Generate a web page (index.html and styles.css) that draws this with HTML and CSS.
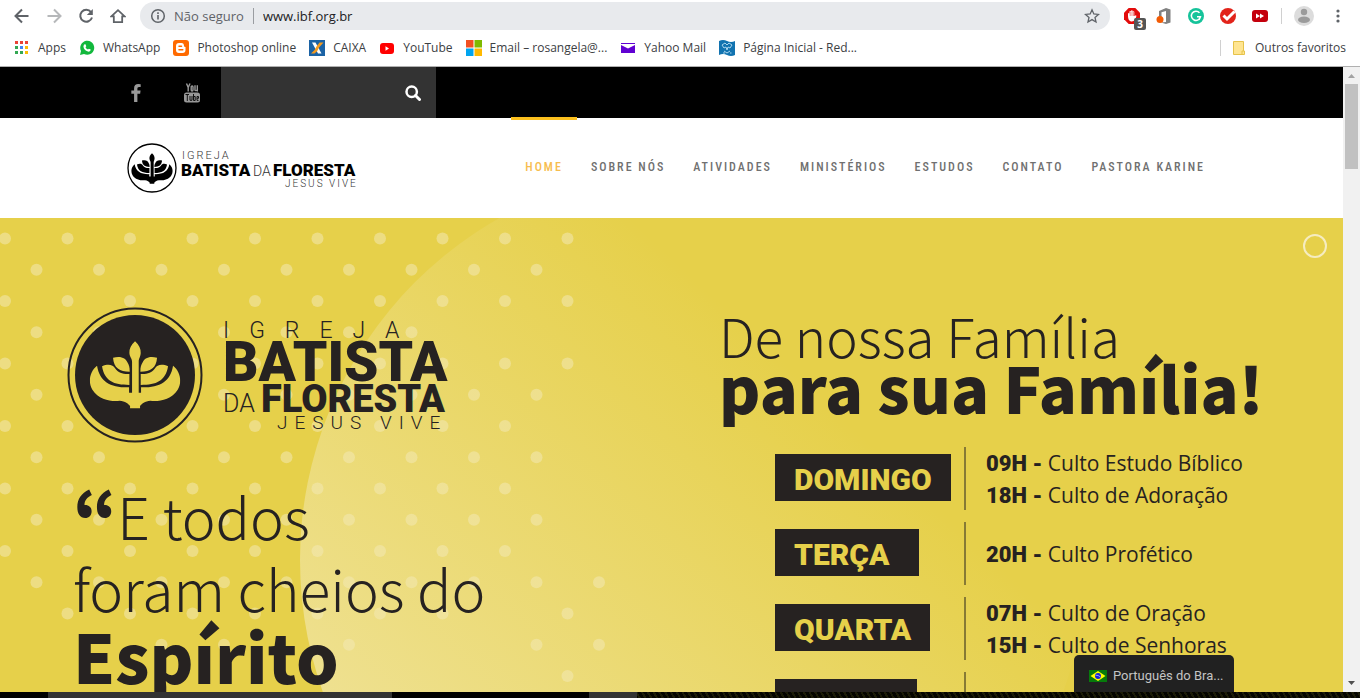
FILE: index.html
```html
<!DOCTYPE html>
<html lang="pt-BR">
<head>
<meta charset="utf-8">
<title>Igreja Batista da Floresta</title>
<link rel="stylesheet" href="styles.css">
</head>
<body>
<svg class="defs" aria-hidden="true">
  <symbol id="plant" viewBox="150 154 272 204">
    <path d="M172 228C150 245 144 277 158 300C178 332 218 336 240 333C256 334 267 343 271 349V356H301V349C305 343 316 334 332 333C354 336 394 332 414 300C428 277 422 245 400 228C392 276 360 294 304 293V309H268V293C212 294 180 276 172 228Z"/>
    <path d="M187 230C205 222 220 225 226 236C236 250 250 254 269 253V286C222 286 194 274 187 230Z"/>
    <path d="M385 230C367 222 352 225 346 236C336 250 322 254 303 253V286C350 286 378 274 385 230Z"/>
    <path d="M220 204C245 198 258 206 263 218C268 226 270 232 270 246C240 245 222 235 220 204Z"/>
    <path d="M352 204C327 198 314 206 309 218C304 226 302 232 302 246C332 245 350 235 352 204Z"/>
    <path d="M286 155C274 166 268 178 269 190C270 203 277 206 277 216V312H297V216C297 206 302 203 303 190C304 178 298 166 286 155Z"/>
  </symbol>
</svg>

<div class="browser">
  <div class="toolbar">
    <button class="tool" aria-label="Voltar"><svg width="16" height="16" viewBox="0 0 16 16"><path class="line" d="M14.500 8H2M8 1.500L1.500 8L8 14.500"/></svg></button>
    <button class="tool tool-off" aria-label="Avançar"><svg width="16" height="16" viewBox="0 0 16 16"><path class="line" d="M1.500 8H14M8 1.500L14.500 8L8 14.500"/></svg></button>
    <button class="tool" aria-label="Recarregar"><svg width="16" height="16" viewBox="0 0 16 16"><path class="line" d="M13 4A6 6 0 1 0 14 9.500"/><path d="M14.800 1V7H8.800Z" fill="#5f6368"/></svg></button>
    <button class="tool" aria-label="Página inicial"><svg width="16" height="16" viewBox="0 0 18 16"><path class="line" d="M1.500 8.500L9 1.500L16.500 8.500H13.700V15H4.300V8.500Z"/></svg></button>
    <div class="omnibox">
      <svg width="16" height="16" viewBox="0 0 16 16"><circle cx="8" cy="8" r="6.300" fill="none" stroke="#5f6368" stroke-width="1.500"/><path d="M7.200 7H8.800V11.500H7.200ZM7.200 4.300H8.800V5.900H7.200Z" fill="#5f6368"/></svg>
      <span class="insecure">Não seguro</span>
      <input class="url" aria-label="Endereço" value="www.ibf.org.br">
      <button class="tool" aria-label="Favoritar"><svg width="16" height="16" viewBox="0 0 16 16"><path d="M8 1.800L9.800 6L14.500 6.400L11 9.500L12 14L8 11.600L4 14L5 9.500L1.500 6.400L6.200 6Z" fill="none" stroke="#5f6368" stroke-width="1.300"/></svg></button>
    </div>
    <div class="extensions">
      <button class="ext" aria-label="Bloqueador"><svg width="16" height="16" viewBox="0 0 16 16"><path d="M4.700 0H11.300L16 4.700V11.300L11.300 16H4.700L0 11.300V4.700Z" fill="#e30b0b"/><path d="M4 8V5.500Q4.700 4.500 5.400 5.500V3.500Q6.200 2.500 7 3.500V2.800Q7.900 1.800 8.700 2.800V3.500Q9.600 2.700 10.300 3.700V8L12 7.200Q13 7.700 11.300 11Q9.500 14 7 13.500Q4 12.500 4 8Z" fill="#fff"/><path d="M6.200 4V8M8 3.500V8M9.600 4V8" stroke="#e30b0b" stroke-width=".5"/></svg><span class="count">3</span></button>
      <button class="ext" aria-label="Office"><svg width="16" height="16" viewBox="0 0 16 16"><path d="M3 3L10 0L14.500 1.500V14.500L10 16L5 14.500L10 14V3L5.500 4.200V9L3 10Z" fill="#808080"/><circle cx="4" cy="11.500" r="3.500" fill="#f35b04"/></svg></button>
      <button class="ext" aria-label="Grammarly"><svg width="16" height="16" viewBox="0 0 16 16"><circle cx="8" cy="8" r="8" fill="#15c39a"/><path d="M11.500 4.800A4.600 4.600 0 1 0 12.500 8.700H9M12.500 8.700L11 11.800" fill="none" stroke="#fff" stroke-width="1.500"/></svg></button>
      <button class="ext" aria-label="Verificador"><svg width="16" height="16" viewBox="0 0 16 16"><circle cx="8" cy="8" r="8" fill="#e2231a"/><path d="M3.500 7.500L7 11L14.500 3.500" fill="none" stroke="#fff" stroke-width="3"/></svg></button>
      <button class="ext" aria-label="Acelerar vídeo"><svg width="16" height="16" viewBox="0 0 16 16"><rect y="2" width="16" height="12" rx="3" fill="#c4000d"/><path d="M4 5.500L8 8L4 10.500ZM8 5.500L12 8L8 10.500Z" fill="#fff"/></svg></button>
    </div>
    <button class="profile" aria-label="Perfil"><svg width="20" height="20" viewBox="0 0 20 20"><circle cx="10" cy="10" r="10" fill="#dcdcdc"/><circle cx="10" cy="6" r="3.200" fill="#9b9b9b"/><ellipse cx="10" cy="13.700" rx="6" ry="3.200" fill="#9b9b9b"/></svg></button>
    <button class="tool" aria-label="Menu"><svg width="16" height="16" viewBox="0 0 16 16" fill="#5f6368"><circle cx="8" cy="3" r="1.600"/><circle cx="8" cy="8" r="1.600"/><circle cx="8" cy="13" r="1.600"/></svg></button>
  </div>

  <nav class="bookmarks" aria-label="Favoritos">
    <a class="bookmark" href="#"><svg width="16" height="16" viewBox="0 0 16 16"><g fill="#ea4335"><path d="M1 1h3v3H1zM6 1h3v3H6zM11 1h3v3h-3z"/></g><path d="M1 6h3v3H1zM1 11h3v3H1zM6 11h3v3H6z" fill="#34a853"/><path d="M6 6h3v3H6z" fill="#4285f4"/><path d="M11 6h3v3h-3zM11 11h3v3h-3z" fill="#fbbc05"/></svg>Apps</a>
    <a class="bookmark" href="#"><svg width="16" height="16" viewBox="0 0 16 16"><path d="M1 15L2 11A7 7 0 1 1 5 14Z" fill="#12b83c"/><path d="M5 4.500L6.500 4.300L7.300 6.300L6.500 7.200Q7.300 8.900 9 9.500L9.900 8.700L11.700 9.500Q11.700 11.500 9.700 11.700Q5 10.800 4.400 6.500Z" fill="#fff"/></svg>WhatsApp</a>
    <a class="bookmark" href="#"><svg width="16" height="16" viewBox="0 0 16 16"><rect width="16" height="16" rx="3" fill="#ff6a00"/><path d="M6 3H8.500Q11 3 11 6Q11 7 12.500 7V10Q12.500 13 9.500 13H6Q3 13 3 10V6Q3 3 6 3Z" fill="#fff"/><path d="M6 6.200H8.500M6 9.800H9.800" stroke="#ff6a00" stroke-width="1.500" stroke-linecap="round"/></svg>Photoshop online</a>
    <a class="bookmark" href="#"><svg width="16" height="16" viewBox="0 0 16 16"><path d="M0 0H16V16H0Z" fill="#1c63a5"/><path d="M3 2.500H6.500L12.500 13.500H9Z" fill="#fff"/><path d="M14.500 2.500H10.500L7.500 6.500Q6.500 10 2 13.500H5.500Q9 11 10 7.500Z" fill="#f59b1f"/></svg>CAIXA</a>
    <a class="bookmark" href="#"><svg width="16" height="16" viewBox="0 0 16 16"><rect x="1" y="3" width="14" height="11" rx="3" fill="#f00"/><path d="M6.500 6.200L10 8.500L6.500 10.800Z" fill="#fff"/></svg>YouTube</a>
    <a class="bookmark" href="#"><svg width="16" height="16" viewBox="0 0 16 16"><path d="M0 0h7.500v7.500H0z" fill="#f25022"/><path d="M8.500 0H16v7.500H8.500z" fill="#7fba00"/><path d="M0 8.500h7.500V16H0z" fill="#00a4ef"/><path d="M8.500 8.500H16V16H8.500z" fill="#ffb900"/></svg>Email – rosangela@...</a>
    <a class="bookmark" href="#"><svg width="16" height="16" viewBox="0 0 16 16"><path d="M1 3H15V13H1Z" fill="#6001d2"/><path d="M1 4H15V5L8 8.500L1 5Z" fill="#fff"/></svg>Yahoo Mail</a>
    <a class="bookmark" href="#"><svg width="16" height="16" viewBox="0 0 16 16"><path d="M0 1Q4 -1 8 1T16 1V15Q12 17 8 15T0 15Z" fill="#1273b0"/><path d="M3 5L6 3L8 5L10 3L13 5L11 8L9 7L8 10L7 7L5 8ZM5 11L8 13L11 11M4 13H6M11 13H12.500" fill="none" stroke="#a9d5ec"/></svg>Página Inicial - Red...</a>
    <a class="bookmark bookmark-last" href="#"><svg width="16" height="16" viewBox="0 0 16 16"><path d="M2.500 1.500H12.500V14.500H2.500Z" fill="#ffe591" stroke="#e6c34a"/><path d="M11 11H13.500V14.500H11Z" fill="#ffe591" stroke="#e6c34a"/></svg>Outros favoritos</a>
  </nav>

  <div class="window">
    <div class="page">
      <div class="topbar">
        <a class="social" href="#" aria-label="Facebook"><svg width="12" height="18" viewBox="95 0 864 1664"><path d="M959 12v264h-157q-86 0-116 36t-30 108v189h293l-39 296h-254v759h-306v-759h-255v-296h255v-218q0-186 104-288.500t277-102.500q147 0 228 12z" fill="#999"/></svg></a>
        <a class="social" href="#" aria-label="YouTube"><svg width="16" height="20" viewBox="0 0 16 20"><g fill="none" stroke="#999" stroke-width="1.400"><path d="M2.500 .5L4.200 4.500V8.500M6 .5L4.200 4.500"/><rect x="7.200" y="3" width="1.800" height="5" rx=".9"/><path d="M11 2.300V7Q11 8.300 13 7M13.300 2.300V8.500"/></g><rect y="9.500" width="16" height="10" rx="2.500" fill="#999"/><path d="M1.500 11.500H5M3.300 11.500V18M6 13V17.300H8V13M9.500 11V17.500H11.200V13.500H9.500M14.500 17.400H13V13.500H14.500V15.300H13" fill="none" stroke="#111"/></svg></a>
        <form class="search">
          <input class="search-input" type="text" aria-label="Buscar">
          <button class="search-btn" type="button" aria-label="Buscar"><svg width="16" height="16" viewBox="0 0 16 16"><circle cx="6.700" cy="6.700" r="5.200" fill="none" stroke="#fff" stroke-width="2.500"/><path d="M10.500 10.500L14.500 14.500" stroke="#fff" stroke-width="3" stroke-linecap="round"/></svg></button>
        </form>
      </div>

      <header class="header">
        <a class="brand" href="#" aria-label="Igreja Batista da Floresta">
          <svg width="232" height="50" viewBox="0 0 232 50">
            <circle cx="25" cy="25" r="24" fill="#fff" stroke="#000" stroke-width="1.300"/>
            <use href="#plant" x="4" y="10" width="42" height="31"/>
            <g font-family="Roboto, sans-serif">
              <text x="55" y="16" font-size="11" font-weight="300" letter-spacing="2" fill="#333">IGREJA</text>
              <text x="54" y="33" font-size="17" font-weight="900">BATISTA</text>
              <text x="126" y="33" font-size="14" font-weight="300" fill="#333">DA</text>
              <text x="146" y="33" font-size="17" font-weight="900">FLORESTA</text>
              <text x="158" y="44" font-size="10" font-weight="300" letter-spacing="2" fill="#333">JESUS VIVE</text>
            </g>
          </svg>
        </a>
        <nav class="menu" aria-label="Principal">
          <a class="menu-link active" href="#">HOME</a>
          <a class="menu-link" href="#">SOBRE NÓS</a>
          <a class="menu-link" href="#">ATIVIDADES</a>
          <a class="menu-link" href="#">MINISTÉRIOS</a>
          <a class="menu-link" href="#">ESTUDOS</a>
          <a class="menu-link" href="#">CONTATO</a>
          <a class="menu-link" href="#">PASTORA KARINE</a>
        </nav>
      </header>

      <main class="hero">
        <svg class="backdrop" aria-hidden="true">
          <defs>
            <linearGradient id="glow" x1="0.05" y1="0.9" x2="0.64" y2="0.27">
              <stop offset="0" stop-color="#f3e9b4" stop-opacity=".8"/>
              <stop offset="1" stop-color="#f3e9b4" stop-opacity="0"/>
            </linearGradient>
          </defs>
          <g id="dots" fill="#eddd83"></g>
          <circle cx="693" cy="342" r="393" fill="url(#glow)"/>
        </svg>

        <section class="verse">
          <svg class="hero-logo" width="380" height="136" viewBox="0 0 380 136" role="img" aria-label="Igreja Batista da Floresta, Jesus Vive">
            <circle cx="68" cy="67" r="66.500" fill="none" stroke="#262221" stroke-width="2"/>
            <circle cx="68" cy="67" r="60" fill="#262221"/>
            <use href="#plant" x="22.700" y="33" width="90.700" height="68" fill="#e6d04a"/>
            <g font-family="Roboto, sans-serif" fill="#262221">
              <text x="156" y="30" font-size="23" font-weight="300" letter-spacing="20">IGREJA</text>
              <text x="156" y="73" font-size="55" font-weight="900">BATISTA</text>
              <text x="156" y="104" font-size="25" font-weight="300">DA</text>
              <text x="194" y="104" font-size="38" font-weight="900">FLORESTA</text>
              <text x="210" y="121" font-size="19" font-weight="300" letter-spacing="7">JESUS VIVE</text>
            </g>
          </svg>
          <p class="quote"><span class="mark">“</span>E todos<br>foram cheios do<strong class="strong">Espírito</strong></p>
        </section>

        <section class="services">
          <h1 class="title">De nossa Família<strong class="title-strong">para sua Família!</strong></h1>
          <div class="schedule">
            <div class="slot"><div class="day-cell"><span class="day">DOMINGO</span></div><div class="times"><p class="time"><b>09H -</b> Culto Estudo Bíblico</p><p class="time"><b>18H -</b> Culto de Adoração</p></div></div>
            <div class="slot"><div class="day-cell"><span class="day day-wide">TERÇA</span></div><div class="times"><p class="time"><b>20H -</b> Culto Profético</p></div></div>
            <div class="slot"><div class="day-cell"><span class="day">QUARTA</span></div><div class="times"><p class="time"><b>07H -</b> Culto de Oração</p><p class="time"><b>15H -</b> Culto de Senhoras</p></div></div>
            <div class="slot"><div class="day-cell"><span class="day day-next"></span></div><div class="times"></div></div>
          </div>
        </section>

        <span class="ring"></span>
        <button class="language"><svg width="18" height="12" viewBox="0 0 18 12"><path d="M0 0H18V12H0Z" fill="#067a0b"/><path d="M9 1L16.500 6L9 11L1.500 6Z" fill="#ff0"/><circle cx="9" cy="6" r="3" fill="#1722d8"/><path d="M6.500 5.200Q9.500 5 11.500 7" fill="none" stroke="#cde" stroke-width=".7"/></svg>Português do Bra...</button>
      </main>
    </div>
    <div class="scrollbar" aria-hidden="true">
      <svg class="arrow" width="17" height="17" viewBox="0 0 17 17"><path d="M5 11L8.500 7L12 11Z" fill="#a3a3a3"/></svg>
      <span class="thumb"></span>
      <svg class="arrow" width="17" height="17" viewBox="0 0 17 17"><path d="M5 6L8.500 10L12 6Z" fill="#505050"/></svg>
    </div>
  </div>
  <div class="taskbar"></div>
</div>
<script src="dots.js"></script>
</body>
</html>
```
FILE: styles.css
```css
* { box-sizing: border-box; }
body { margin: 0; background: #fff; font-family: "Open Sans", "Noto Sans", sans-serif; }
button { border: 0; padding: 0; background: none; font: inherit; color: inherit; }
a { color: inherit; text-decoration: none; }
p, h1 { margin: 0; }
svg { flex: none; display: block; }
.defs { position: absolute; width: 0; height: 0; }

.browser { display: flex; flex-direction: column; height: 100vh; overflow: hidden; }
.toolbar { display: flex; align-items: center; height: 32px; padding: 0 14px; gap: 16px; }
.tool { display: flex; }
.tool-off { opacity: .45; }
.line { fill: none; stroke: #5f6368; stroke-width: 2; }
.omnibox { display: flex; flex: 1; align-items: center; height: 28px; margin-left: -2px; padding: 0 10px; border-radius: 14px; background: #e8eaed; font-size: 13px; }
.insecure { margin-left: 8px; padding-right: 9px; border-right: 1px solid #9a9da1; line-height: 16px; color: #5f6368; white-space: nowrap; }
.url { flex: 1; min-width: 0; margin-left: 9px; padding: 0; border: 0; background: none; font: inherit; color: #202124; outline: 0; }
.extensions { display: flex; gap: 16px; margin-left: -2px; padding-right: 13px; border-right: 1px solid #d0d0d0; }
.ext { position: relative; display: flex; }
.count { position: absolute; left: 10px; top: 10px; width: 12px; height: 12px; border-radius: 2px; background: #555; color: #fff; font-size: 10px; font-weight: 700; line-height: 12px; text-align: center; }
.profile { display: flex; margin-left: -4px; }

.bookmarks { display: flex; align-items: center; height: 35px; padding: 0 14px 3px; gap: 13px; border-bottom: 1px solid #b0b0b0; font-size: 12px; color: #3c4043; white-space: nowrap; }
.bookmark { display: flex; align-items: center; gap: 8px; line-height: 16px; }
.bookmark-last { margin-left: auto; padding-left: 10px; border-left: 1px solid #d0d0d0; }

.window { display: flex; flex: 1; min-height: 0; }
.page { flex: 1; min-width: 0; display: flex; flex-direction: column; }
.scrollbar { display: flex; flex-direction: column; width: 17px; background: #f1f1f1; }
.thumb { height: 85px; margin: 0 2px auto; background: #c1c1c1; }

.topbar { display: flex; flex: none; height: 51px; padding-left: 108px; background: #000; }
.social { display: flex; width: 56px; align-items: center; justify-content: center; }
.search { display: flex; width: 215px; margin-left: 1px; padding-right: 15px; background: #333; }
.search-input { flex: 1; min-width: 0; border: 0; background: none; color: #fff; outline: 0; }
.search-btn { display: flex; align-items: center; }

.header { display: flex; flex: none; justify-content: space-between; height: 100px; padding: 0 124px 0 127px; background: #fff; }
.brand { display: flex; align-items: center; }
.menu { display: flex; }
.menu-link { display: flex; align-items: center; margin-top: -1px; padding: 0 14px 4px; border-top: 3px solid transparent; font-family: "Roboto Condensed", "Liberation Sans Narrow", Roboto, sans-serif; font-size: 12px; font-weight: 500; letter-spacing: 2px; color: #707070; white-space: nowrap; }
.menu-link.active { border-top-color: #fcc01e; color: #f7bd4f; }

.hero { position: relative; flex: 1; min-height: 0; display: grid; grid-template-columns: 719fr 624fr; overflow: hidden; background: #e6d04a; color: #262221; }
.backdrop { position: absolute; inset: 0; width: 100%; height: 100%; }
.verse { position: relative; padding: 90px 0 0 67px; }
.services { position: relative; padding-top: 85px; }
.hero-logo { overflow: visible; }
.quote { margin-top: 35px; padding-left: 6px; font-family: "Noto Sans CJK JP", sans-serif; font-size: 57px; font-weight: 300; line-height: 72px; white-space: nowrap; }
.mark { font-size: 70px; font-weight: 900; line-height: 0; vertical-align: -4px; }
.strong { display: block; font-size: 67px; font-weight: 900; line-height: 64px; }
.title { font-family: "Noto Sans CJK JP", sans-serif; font-size: 53px; font-weight: 300; line-height: 64px; white-space: nowrap; }
.title-strong { display: block; font-size: 63px; font-weight: 900; line-height: 40px; }

.schedule { display: grid; gap: 12px; margin-top: 40px; padding-left: 56px; }
.slot { display: grid; grid-template-columns: 189px 1fr; height: 63px; }
.day-cell { display: flex; align-items: flex-start; padding-top: 7px; }
.day { height: 47px; padding: 0 19px; background: #262221; color: #e6d04a; font-family: Roboto, sans-serif; font-size: 30px; font-weight: 900; line-height: 51px; }
.day-wide { padding-right: 30px; }
.day-next { width: 142px; }
.times { display: flex; flex-direction: column; justify-content: center; height: 63px; padding-left: 20px; border-left: 2px solid #877a35; }
.time { font-size: 21px; font-weight: 400; line-height: 32px; white-space: nowrap; }
.time b { font-family: Roboto, sans-serif; font-size: 22px; font-weight: 900; line-height: 1; }

.ring { position: absolute; top: 16px; right: 16px; width: 24px; height: 24px; border: 2px solid #f5ecc0; border-radius: 50%; }
.language { position: absolute; right: 109px; bottom: 0; display: flex; align-items: center; gap: 6px; width: 160px; height: 37px; padding: 4px 0 0 15px; border-radius: 5px 5px 0 0; background: #212121; color: #c4c4c4; font-family: Roboto, sans-serif; font-size: 13px; white-space: nowrap; }

.taskbar { flex: none; height: 6px; background: linear-gradient(90deg, #000 48px, #333 48px 392px, #000 392px 589px, #333 589px 637px, transparent 637px), repeating-linear-gradient(60deg, #050500 0 3px, #1c1c08 3px 5px); }
```
FILE: dots.js
```js
// Column range [first, last] of each dotted row, top to bottom.
const rows = [[0, 9], [0, 8], [0, 9], [0, 6], [0, 9], [0, 8], [0, 8], [0, 8], [0, 8], [0, 8], [0, 8], [0, 9], [1, 9], [2, 9], [9, 9]];
const skipped = new Set(["12-8", "13-6", "13-4", "13-7"]);
const group = document.getElementById("dots");
rows.forEach(([first, last], row) => {
  for (let col = first; col <= last; col++) {
    if (skipped.has(row + "-" + col)) continue;
    const dot = document.createElementNS("http://www.w3.org/2000/svg", "circle");
    dot.setAttribute("cx", (row % 2 ? 36.5 : 5) + col * 62.5);
    dot.setAttribute("cy", 20.5 + row * 31.25);
    dot.setAttribute("r", 6);
    group.appendChild(dot);
  }
});
```
